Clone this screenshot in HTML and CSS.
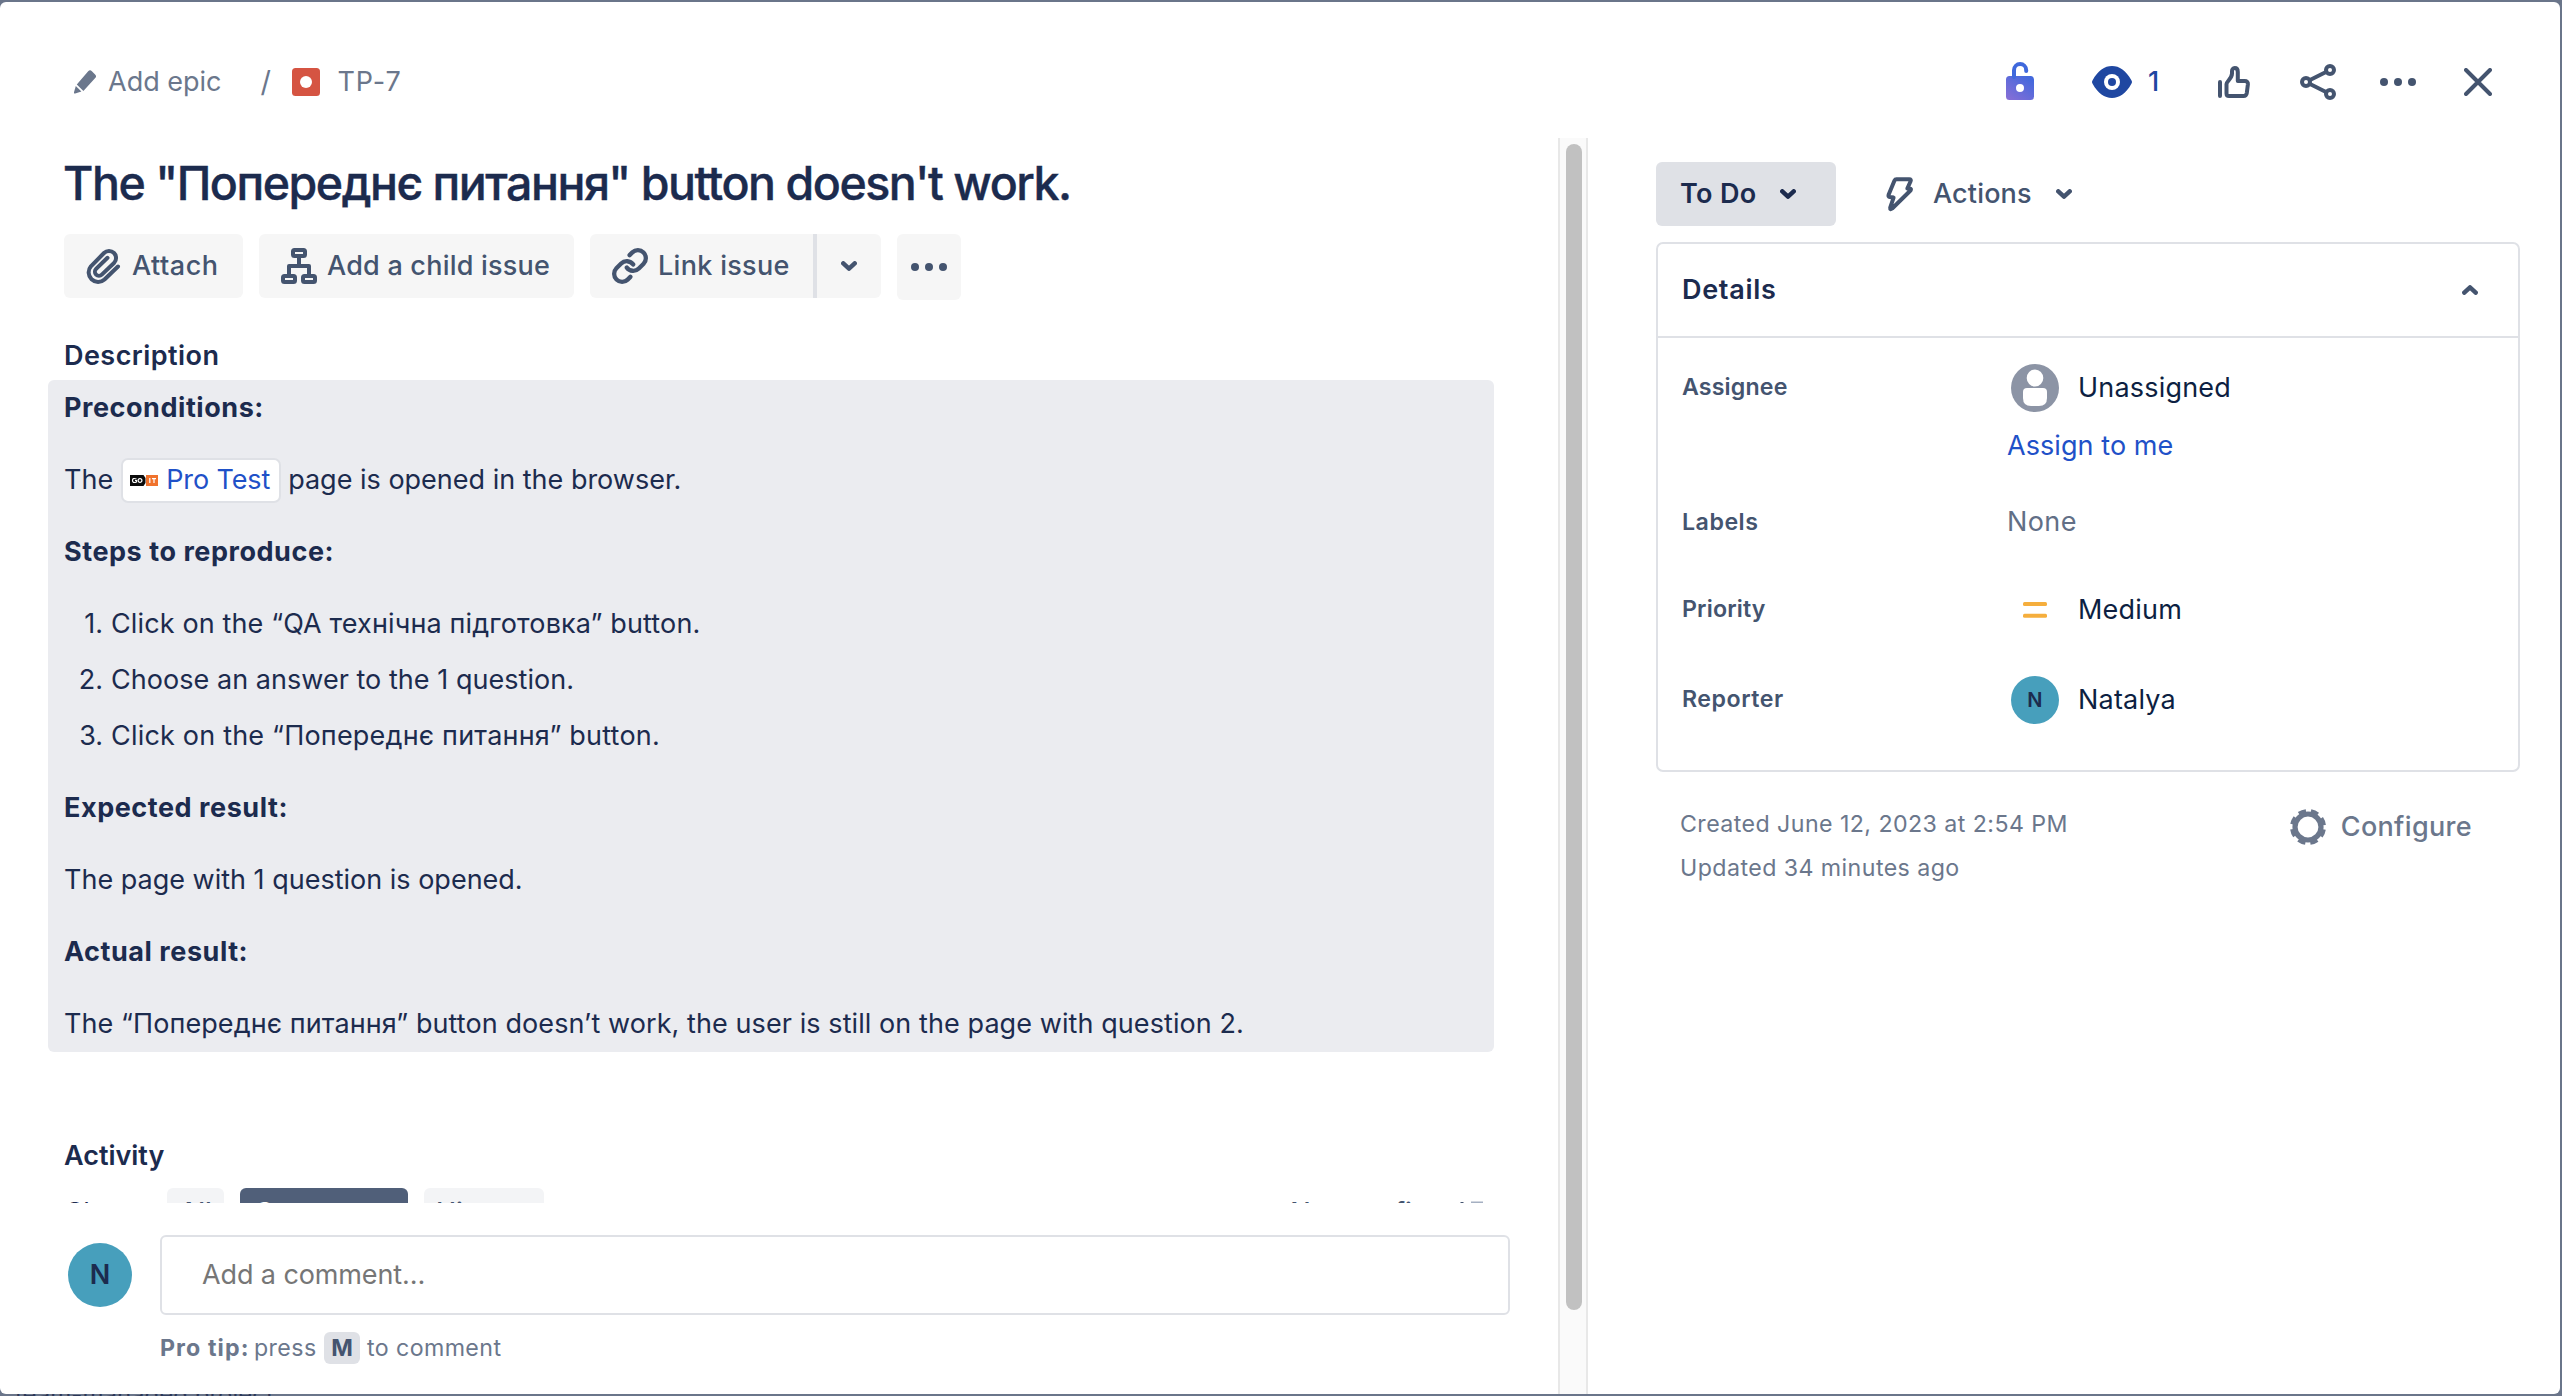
FILE: index.html
```html
<!DOCTYPE html>
<html lang="en">
<head>
<meta charset="utf-8">
<title>TP-7</title>
<link rel="stylesheet" href="styles.css">
</head>
<body>
<div class="modal">
  <header class="header">
    <nav class="crumbs">
      <svg class="pencil" width="24" height="24" viewBox="0 0 24 24" fill="currentColor"><path d="M15.200 1.200a2.600 2.600 0 0 1 3.700 0l3.200 3.200a2.600 2.600 0 0 1 .1 3.700L10.400 21 3.800 14.400z"/><path d="M2.800 16l5.600 5.600-6.200 1.800c-1 .2-1.400-.3-1.200-1.200z"/></svg>
      <span class="crumb-epic">Add epic</span>
      <span class="crumb-sep">/</span>
      <svg class="bug" width="28" height="28" viewBox="0 0 28 28"><rect width="28" height="28" rx="3.500" fill="#d55442"/><circle cx="14" cy="14" r="6" fill="#fff"/></svg>
      <span class="crumb-key">TP-7</span>
    </nav>
    <div class="tools">
      <svg width="28" height="38" viewBox="0 0 28 38"><defs><linearGradient id="lock" x1="0" y1="38" x2="24" y2="4" gradientUnits="userSpaceOnUse"><stop offset="0" stop-color="#8a6fd6"/><stop offset=".75" stop-color="#4468dc"/><stop offset="1" stop-color="#3a67dd"/></linearGradient></defs><path fill="url(#lock)" fill-rule="evenodd" d="M3.500 14h21a3.500 3.500 0 0 1 3.500 3.500v17a3.500 3.500 0 0 1-3.500 3.500h-21A3.500 3.500 0 0 1 0 34.500v-17A3.500 3.500 0 0 1 3.500 14zM14 22a4 4 0 1 0 0 8 4 4 0 0 0 0-8z"/><path d="M8 15V8.200a6.100 6.100 0 0 1 12.200 0V9" fill="none" stroke="#3f68dc" stroke-width="4" stroke-linecap="round"/></svg>
      <svg class="eye" width="40" height="32" viewBox="0 0 40 32"><path fill="#1f47a1" d="M.6 14.200C6 4.500 12.500 0 20 0s14 4.500 19.400 14.200c.8 1.400.8 2.200 0 3.600C34 27.500 27.500 32 20 32S6 27.500.6 17.800c-.8-1.400-.8-2.200 0-3.600z"/><circle cx="20" cy="16" r="8" fill="#fff"/><circle cx="20" cy="16" r="4" fill="#1f47a1"/></svg>
      <span class="watchers">1</span>
      <svg class="thumb line" width="33" height="32" viewBox="0 0 33 32"><path d="M2 16v14M8.500 18c0-2.600 5.500-5.500 5.500-10.500V5.300c0-2 1-3.200 2.700-3.200 2.200 0 3.100 1.700 3.100 3.900v9h6.900c2.200 0 3.400 1.200 3.200 3.200L28.800 27c-.3 2-1.400 3-3.200 3H11c-1.600 0-2.500-1-2.500-2.500z"/></svg>
      <svg class="share line" width="36" height="36" viewBox="0 0 36 36"><circle cx="6" cy="18" r="4"/><circle cx="30" cy="6" r="4"/><circle cx="30" cy="30" r="4"/><path d="M10 16L26 8M10 20l16 8"/></svg>
      <svg class="dots" width="36" height="8" viewBox="0 0 36 8"><circle cx="4" cy="4" r="4"/><circle cx="18" cy="4" r="4"/><circle cx="32" cy="4" r="4"/></svg>
      <svg class="close line" width="28" height="28" viewBox="0 0 28 28"><path d="M2 2l24 24M26 2L2 26"/></svg>
    </div>
  </header>

  <div class="body">
    <main class="left">
      <div class="scroll">
        <h1 class="title">The "Попереднє питання" button doesn't work.</h1>
        <div class="toolbar">
          <button class="btn attach">
            <svg class="line" width="35" height="37" viewBox="0 0 35 37"><path d="M32 18.500L18.500 31.500A9.500 9.500 0 0 1 4.900 18.300L18 5a7.050 7.050 0 0 1 10 10L15.800 26.600a4 4 0 0 1-5.700-5.700L21.500 9.800"/></svg>
            <span>Attach</span>
          </button>
          <button class="btn child">
            <svg class="line square" width="36" height="36" viewBox="0 0 36 36"><rect x="12" y="2" width="12" height="6" rx="1.500"/><rect x="2" y="28" width="12" height="6" rx="1.500"/><rect x="22" y="28" width="12" height="6" rx="1.500"/><path d="M18 9v8M8 27v-9h20v9"/></svg>
            <span>Add a child issue</span>
          </button>
          <div class="split">
            <button class="btn link">
              <svg class="line" width="36" height="36" viewBox="0.700 0.700 22.600 22.600"><path stroke-width="2.700" d="M10 13a5 5 0 0 0 7.540.54l3-3a5 5 0 0 0-7.070-7.070l-1.720 1.710"/><path stroke-width="2.700" d="M14 11a5 5 0 0 0-7.540-.54l-3 3a5 5 0 0 0 7.070 7.070l1.710-1.710"/></svg>
              <span>Link issue</span>
            </button>
            <button class="btn caret"><svg class="chev" width="16" height="10" viewBox="0 0 16 10"><path d="M2.300 2.300L8 7.700l5.700-5.400"/></svg></button>
          </div>
          <button class="btn more"><svg class="dots" width="36" height="8" viewBox="0 0 36 8"><circle cx="4" cy="4" r="4"/><circle cx="18" cy="4" r="4"/><circle cx="32" cy="4" r="4"/></svg></button>
        </div>

        <h2 class="section">Description</h2>
        <div class="description">
          <p class="strong">Preconditions:</p>
          <p class="with-card">The <a class="card"><svg width="28" height="11" viewBox="0 0 28 11"><path d="M0 0h13.500L15.500 3v5l-2 3H0z" fill="#0b0b0b"/><path d="M16 0h12v11H16z" fill="#f0722c"/><g fill="none" stroke="#fff" stroke-width="1.200"><path d="M6.500 4Q2.500 2.500 2.500 5.500T6.500 7V5.500H5M19.800 3v5M22 3.600h4M24 3.600V8"/><circle cx="10" cy="5.500" r="1.900"/></g></svg><span>Pro Test</span></a> page is opened in the browser.</p>
          <p class="strong">Steps to reproduce:</p>
          <ol class="steps">
            <li><span class="num">1.</span><span class="s1">Click on the “QA технічна підготовка” button.</span></li>
            <li><span class="num">2.</span><span class="s2">Choose an answer to the 1 question.</span></li>
            <li><span class="num">3.</span><span class="s3">Click on the “Попереднє питання” button.</span></li>
          </ol>
          <p class="strong">Expected result:</p>
          <p>The page with 1 question is opened.</p>
          <p class="strong">Actual result:</p>
          <p class="actual">The “Попереднє питання” button doesn’t work, the user is still on the page with question 2.</p>
        </div>

        <h2 class="section activity">Activity</h2>
        <div class="filters">
          <span class="show">Show:</span>
          <span class="chip all">All</span>
          <span class="chip comments">Comments</span>
          <span class="chip history">History</span>
          <span class="sort">Newest first</span>
          <svg class="sort-icon" width="24" height="48" viewBox="0 0 24 48"><path d="M12 14.600h12M12 20.600h9M12 26.600h6" stroke="#a5b0c2" stroke-width="2"/><path d="M3 14v15" stroke="#44546f" stroke-width="3"/></svg>
        </div>
      </div>
      <footer class="composer">
        <span class="avatar big">N</span>
        <div class="compose">
          <div class="input">Add a comment…</div>
          <p class="tip"><b>Pro tip:</b> <span class="press">press</span> <kbd>M</kbd> <span class="tc">to comment</span></p>
        </div>
      </footer>
    </main>

    <div class="track"><div class="handle"></div></div>

    <aside class="right">
      <div class="status-row">
        <button class="status"><span>To Do</span><svg class="chev" width="16" height="10" viewBox="0 0 16 10"><path d="M2.300 2.300L8 7.700l5.700-5.400"/></svg></button>
        <button class="actions">
          <svg class="line" width="28" height="35" viewBox="0 0 28 35"><path d="M10.500 2.300h12.800q2.200 0 1.300 2l-3.300 7.200h2.600q1.800.3.600 2L6.200 31.500q-2.300 1.700-2-.8L7.600 20.600 3.800 20Q2 19.700 2.600 17.800L8.500 3.600q.6-1.300 2-1.300z"/></svg>
          <span>Actions</span>
          <svg class="chev" width="16" height="10" viewBox="0 0 16 10"><path d="M2.300 2.300L8 7.700l5.700-5.400"/></svg>
        </button>
      </div>
      <section class="details">
        <div class="details-head"><span>Details</span><svg class="chev" width="16" height="10" viewBox="0 0 16 10"><path d="M2.300 7.700L8 2.300l5.700 5.400"/></svg></div>
        <dl class="fields">
          <dt>Assignee</dt>
          <dd class="assignee">
            <div class="person"><svg width="48" height="48" viewBox="0 0 48 48"><circle cx="24" cy="24" r="24" fill="#8c94a5"/><ellipse cx="24" cy="14" rx="8.300" ry="8.600" fill="#fff"/><path fill="#fff" d="M16 24h16q4 0 4 4v6q0 8-8 8h-8q-8 0-8-8v-6q0-4 4-4z"/></svg><span>Unassigned</span></div>
            <a class="assign">Assign to me</a>
          </dd>
          <dt class="wide">Labels</dt>
          <dd class="none">None</dd>
          <dt>Priority</dt>
          <dd class="person priority"><svg width="48" height="48" viewBox="0 0 48 48"><rect x="12" y="16" width="24" height="4" rx="1.500" fill="#f5ae3d"/><rect x="12" y="27.700" width="24" height="4" rx="1.500" fill="#f5ae3d"/></svg><span>Medium</span></dd>
          <dt class="wide">Reporter</dt>
          <dd class="person reporter"><span class="avatar small">N</span><span>Natalya</span></dd>
        </dl>
      </section>
      <div class="meta">
        <div class="dates"><p>Created June 12, 2023 at 2:54 PM</p><p>Updated 34 minutes ago</p></div>
        <button class="configure">
          <svg width="36" height="36" viewBox="0 0 36 36" fill="none" stroke="currentColor"><circle cx="18" cy="18" r="13" stroke-width="5.200"/><circle cx="18" cy="18" r="16.300" stroke-width="3.400" stroke-dasharray="7.600 5.200" stroke-dashoffset="-2.600"/></svg>
          <span>Configure</span>
        </button>
      </div>
    </aside>
  </div>
</div>
<div class="backdrop-note">team-managed project</div>
</body>
</html>
```
FILE: styles.css
```css
* { box-sizing: border-box; }
body {
  margin: 0;
  height: 1396px;
  padding: 2px 2px 0 0;
  overflow: hidden;
  background: #6a758a;
  color: #1c2b4e;
  font: 400 27px/40px Inter, "Noto Sans", sans-serif;
}
h1, h2, p, ol, dl, dd { margin: 0; padding: 0; }
button { border: 0; margin: 0; padding: 0; background: none; color: #44546f; font: 500 27px/40px Inter, sans-serif; display: flex; align-items: center; }
svg { display: block; flex: none; }
.line { fill: none; stroke: #44546f; stroke-width: 4; stroke-linecap: round; stroke-linejoin: round; }
.square { stroke-linecap: butt; }
.dots { fill: #44546f; }
.chev { fill: none; stroke: currentColor; stroke-width: 4.4; stroke-linecap: round; stroke-linejoin: round; }

.modal { height: 1392px; background: #fff; border-radius: 6px; overflow: hidden; display: flex; flex-direction: column; }
.header { height: 136px; flex: none; padding: 48px 68px 24px 73px; display: flex; justify-content: space-between; }
.crumbs, .tools { display: flex; align-items: center; height: 64px; color: #6b778c; }
.crumb-epic { margin-left: 11px; }
.crumb-sep { margin-left: 39px; width: 11px; font-size: 29px; }
.bug { margin-left: 20px; }
.crumb-key { margin-left: 18px; letter-spacing: .9px; }
.tools svg:first-child { margin-top: -2px; }
.eye { margin-left: 58px; }
.watchers { margin-left: 16px; width: 14px; color: #1f47a1; font-weight: 500; }
.thumb { margin-left: 56px; }
.share { margin-left: 49px; }
.tools .dots { margin-left: 44px; }
.close { margin-left: 48px; }

.body { flex: 1; min-height: 0; display: grid; grid-template-columns: 1558px 30px 1fr; }
.left { display: flex; flex-direction: column; }
.scroll { height: 1065px; flex: none; overflow: hidden; padding: 17px 64px 0 48px; }
.title { margin-left: 15px; font-size: 46.5px; line-height: 56px; font-weight: 500; letter-spacing: -1.47px; white-space: nowrap; -webkit-text-stroke: .4px #1c2b4e; }
.toolbar { display: flex; align-items: flex-start; margin: 23px 0 0 16px; height: 66px; }
.btn { height: 64px; background: #f6f6f6; border-radius: 6px; white-space: nowrap; }
.attach { width: 179px; padding-left: 22px; letter-spacing: .5px; }
.attach span { margin-left: 11px; }
.child { width: 315px; margin-left: 16px; padding-left: 22px; letter-spacing: .22px; }
.child span { margin-left: 10px; }
.split { display: flex; margin-left: 16px; }
.link { width: 223px; padding-left: 22px; border-radius: 6px 0 0 6px; letter-spacing: .31px; }
.link span { margin-left: 10px; }
.caret { width: 68px; border-left: 4px solid #dfe1e6; border-radius: 0 6px 6px 0; justify-content: center; }
.more { width: 64px; height: 66px; margin-left: 16px; justify-content: center; }
.section { margin: 36px 0 0 16px; font-size: 27px; font-weight: 600; letter-spacing: .45px; }
.description { margin-top: 4px; width: 1446px; height: 672px; padding: 8px 16px; background: #ebecf0; border-radius: 6px; display: flex; flex-direction: column; gap: 32px; }
.description p { height: 40px; white-space: nowrap; }
.description .strong { font-weight: 700; letter-spacing: .55px; }
.with-card { display: flex; align-items: center; white-space: pre; }
.card { display: flex; align-items: center; height: 45px; width: 160px; margin: 0 7px 0 8px; padding-left: 7px; border: 2px solid #dfe1e6; border-radius: 7px; background: #fff; color: #1f51c8; }
.card span { margin-left: 8px; letter-spacing: -.1px; }
.steps { list-style: none; display: flex; flex-direction: column; gap: 16px; }
.steps li { display: flex; white-space: nowrap; }
.num { width: 39px; margin-right: 8px; text-align: right; }
.s1 { letter-spacing: .13px; }
.s2 { letter-spacing: .04px; }
.s3 { letter-spacing: .2px; }
.actual { letter-spacing: .08px; }
.activity { margin-top: 84px; letter-spacing: -.02px; }
.filters { display: flex; align-items: flex-start; margin: 12px 11px 0 18px; height: 48px; line-height: 49px; white-space: nowrap; }
.show { width: 101px; color: #1c2b4e; }
.chip { height: 48px; border-radius: 6px; background: #f3f4f6; color: #44546f; font-weight: 500; text-align: center; }
.all { width: 57px; }
.comments { width: 168px; margin-left: 16px; background: #505f79; color: #fff; }
.history { width: 120px; margin-left: 16px; padding-left: 12px; text-align: left; }
.sort { margin-left: auto; line-height: 50px; color: #44546f; font-weight: 500; }
.sort-icon { margin-left: 13px; }

.avatar { display: flex; align-items: center; justify-content: center; border-radius: 50%; background: #479fbc; color: #1c2b4e; flex: none; }
.big { width: 64px; height: 64px; margin-top: 8px; font-weight: 600; font-size: 27px; }
.small { width: 48px; height: 48px; font-size: 20px; font-weight: 600; }
.composer { display: flex; padding: 32px 48px 0 68px; }
.compose { flex: 1; margin-left: 28px; }
.input { height: 80px; border: 2px solid #dfe1e6; border-radius: 6px; padding-left: 40px; line-height: 76px; color: #767676; letter-spacing: -.11px; }
.tip { display: flex; align-items: center; margin-top: 17px; height: 32px; font-size: 23.2px; line-height: 32px; color: #6b778c; }
.tip b { width: 94px; letter-spacing: 1.1px; white-space: nowrap; }
.press { width: 70px; letter-spacing: .4px; }
.tip kbd { width: 36px; height: 32px; border-radius: 6px; background: #dfe1e6; color: #44546f; font: 700 23.2px/32px Inter, sans-serif; text-align: center; }
.tc { margin-left: 7px; letter-spacing: .4px; }

.track { background: #fafafa; border: solid #e8e8e8; border-width: 0 2px; padding: 6px 4px 0 6px; }
.handle { width: 16px; height: 1166px; border-radius: 8px; background: #c1c1c1; }

.right { padding: 24px 40px 0 68px; }
.status-row { display: flex; }
.status { width: 180px; height: 64px; border-radius: 6px; background: #dfe1e6; padding-left: 24px; color: #1c2b4e; font-weight: 600; letter-spacing: .35px; }
.status span { width: 100px; text-align: left; }
.actions { margin-left: 50px; letter-spacing: .16px; }
.actions span { width: 123px; margin-left: 19px; text-align: left; }
.details { margin-top: 16px; height: 530px; border: 2px solid #dfe1e6; border-radius: 7px; }
.details-head { height: 94px; border-bottom: 2px solid #dfe1e6; padding: 0 40px 0 24px; display: flex; align-items: center; justify-content: space-between; font-weight: 600; letter-spacing: .7px; }
.details-head .chev { color: #44546f; }
.fields { display: grid; grid-template-columns: 325px 1fr; padding: 26px 0 0 24px; color: #0d1f42; }
.fields dt { line-height: 46px; font-size: 23.2px; font-weight: 600; letter-spacing: .15px; color: #44546f; }
.fields .wide { letter-spacing: .5px; }
.person { display: flex; align-items: center; height: 48px; padding-left: 4px; letter-spacing: .2px; }
.person > span:last-child { margin-left: 19px; }
.assignee { height: 138px; }
.assign { display: block; margin-top: 14px; color: #1f51c8; letter-spacing: .07px; }
.none { height: 84px; color: #626f86; letter-spacing: .4px; }
.fields dt:nth-of-type(2) { line-height: 41px; }
.priority { margin-bottom: 42px; }
.fields dt:nth-of-type(3), .fields dt:nth-of-type(4) { line-height: 47px; }
.meta { display: flex; justify-content: space-between; padding: 30px 48px 0 24px; color: #6b778c; }
.dates { font-size: 23.2px; line-height: 44px; letter-spacing: .43px; }
.configure { height: 50px; color: #6b778c; letter-spacing: .33px; }
.configure span { margin-left: 15px; }

.backdrop-note { height: 2px; overflow: hidden; padding-left: 15px; font-size: 24px; line-height: 2px; color: #2b3757; white-space: nowrap; }
```
